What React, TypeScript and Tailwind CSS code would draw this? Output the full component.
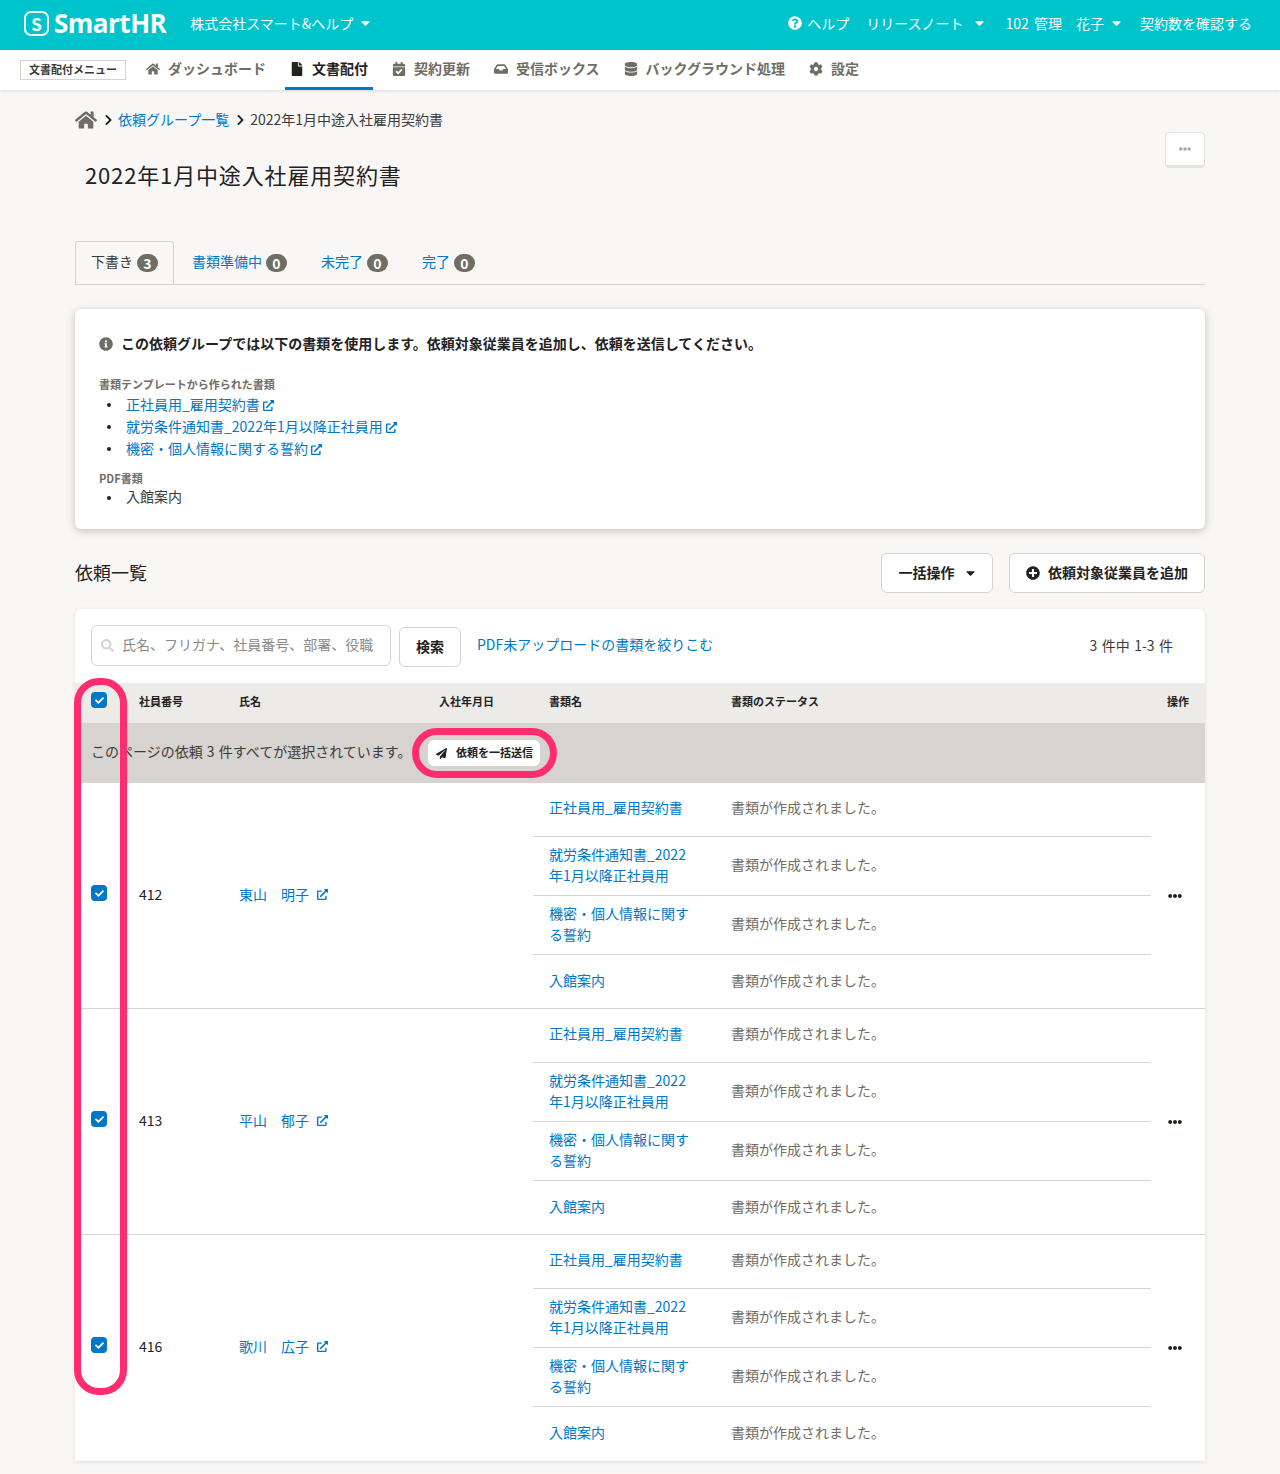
import React from "react";
import {
  FaHome, FaFile, FaCalendarCheck, FaInbox, FaDatabase, FaCog, FaQuestionCircle, FaInfoCircle,
  FaExternalLinkAlt, FaPaperPlane, FaPlusCircle, FaSearch, FaCaretDown, FaEllipsisH, FaChevronRight, FaCheck,
} from "react-icons/fa";

const Check = () => (
  <span className="flex h-4 w-4 items-center justify-center rounded-[4px] bg-[#0077c7] text-white">
    <FaCheck className="h-[9px] w-[9px]" />
  </span>
);

const Badge = ({ n }: { n: number }) => (
  <span className="ml-1 flex h-[18px] w-[21px] items-center justify-center rounded-full bg-[#706d65] text-[14px] font-bold leading-none text-white">{n}</span>
);

const Ext = ({ c = "ml-[3px]" }: { c?: string }) => <FaExternalLinkAlt className={`inline-block h-[11px] w-[11px] text-[#0077c7] ${c}`} />;

const docs = [
  { h: "h-[54px]", p: "pb-[4px]", t: "正社員用_雇用契約書" },
  { h: "h-[59px]", p: "pb-[2px]", t: "就労条件通知書_2022年1月以降正社員用" },
  { h: "h-[59px]", p: "pb-[2px]", t: "機密・個人情報に関する誓約" },
  { h: "h-[54px]", p: "pb-[4px]", t: "入館案内" },
];

const nav = [
  { i: <FaHome />, t: "ダッシュボード" },
  { i: <FaFile />, t: "文書配付", a: true },
  { i: <FaCalendarCheck />, t: "契約更新" },
  { i: <FaInbox />, t: "受信ボックス" },
  { i: <FaDatabase />, t: "バックグラウンド処理" },
  { i: <FaCog />, t: "設定" },
];

const Row = ({ id, name }: { id: string; name: string }) => (
  <div className="grid h-[226px] grid-cols-[48px_100px_200px_110px_618px_54px] border-b border-[#d6d3d0] last:border-b-0">
    <div className="flex items-center pb-[6px] pl-4"><Check /></div>
    <div className="flex items-center pb-[4px] pl-4 text-[14px]">{id}</div>
    <div className="flex items-center pl-4 text-[14px] text-[#0077c7]"><span className="whitespace-pre pb-[4px]">{name}</span><Ext c="ml-[8px] h-3 w-3 mb-[4px]" /></div>
    <div />
    <div>
      {docs.map((d, i) => (
        <div key={i} className={`flex items-center ${d.h} ${i < 3 ? "border-b border-[#d6d3d0]" : ""}`}>
          <div className={`w-[198px] shrink-0 pl-4 ${d.p}`}><span className="block w-[146px] text-[14px] leading-[21px] text-[#0077c7]">{d.t}</span></div>
          <span className="pb-[4px] text-[14px] text-[#706d65]">書類が作成されました。</span>
        </div>
      ))}
    </div>
    <div className="flex items-center justify-center pr-[7px] text-[#23221e]"><FaEllipsisH className="h-[14px] w-[14px]" /></div>
  </div>
);

export default function App() {
  return (
    <div className="relative h-[1474px] overflow-hidden bg-[#f8f7f6] text-[#23221e]" style={{ fontFamily: '"Noto Sans CJK JP", "Noto Sans", sans-serif' }}>
      <header className="flex h-[50px] items-center justify-between bg-[#00c4cc] pb-[4px] pl-6 pr-[28px] text-[14px] text-white">
        <div className="flex items-center">
          <span className="flex h-[25px] w-[25px] items-center justify-center rounded-[7px] border-[2.5px] border-white text-[17px] font-bold leading-none">S</span>
          <span className="ml-[5px] text-[26px] font-bold leading-none tracking-[-0.5px]" style={{ fontFamily: '"Open Sans", sans-serif' }}>SmartHR</span>
          <span className="ml-[24px]">株式会社スマート&amp;ヘルプ</span>
          <FaCaretDown className="ml-[7px] h-[14px] w-[11px]" />
        </div>
        <div className="flex items-center">
          <FaQuestionCircle className="h-[14px] w-[14px]" />
          <span className="ml-[5px]">ヘルプ</span>
          <span className="ml-[17px]">リリースノート</span>
          <FaCaretDown className="ml-[10px] h-[14px] w-[11px]" />
          <span className="ml-[21px] [word-spacing:2px]">102 管理</span>
          <span className="ml-[14px]">花子</span>
          <FaCaretDown className="ml-[7px] h-[14px] w-[11px]" />
          <span className="ml-[18px]">契約数を確認する</span>
        </div>
      </header>

      <nav className="relative flex h-10 items-center gap-[14px] bg-white pl-5 shadow-[0_1px_3px_rgba(0,0,0,0.12)]">
        <span className="mr-[1px] flex h-5 w-[106px] items-center justify-center border border-[#d6d3d0] text-[11px] font-bold text-[#3c3b36]"><span className="pb-[2px]">文書配付メニュー</span></span>
        {nav.map((n) => (
          <div key={n.t} className={`flex h-10 items-center gap-[8px] px-[5px] text-[14px] font-bold ${n.a ? "border-b-[3px] border-[#0077c7] pt-[3px] text-[#23221e]" : "text-[#706d65]"}`}>
            <span className="pb-[2px] text-[14px]">{n.i}</span>
            <span className="pb-[4px]">{n.t}</span>
          </div>
        ))}
      </nav>

      <main className="px-[75px]">
        <div className="mt-[19px] flex h-[22px] items-center text-[14px]">
          <FaHome className="h-[20px] w-[22px] text-[#706d65]" />
          <FaChevronRight className="ml-[7px] h-[12px] w-[9px]" />
          <span className="ml-[5px] pb-[2px] text-[#0077c7]">依頼グループ一覧</span>
          <FaChevronRight className="ml-[7px] h-[12px] w-[9px]" />
          <span className="ml-[5px] pb-[2px] text-[#3c3b36]">2022年1月中途入社雇用契約書</span>
        </div>

        <div className="mt-px flex items-start justify-between">
          <h1 className="mt-[26px] pl-[10px] text-[22px] font-normal leading-8 tracking-[0.85px]">2022年1月中途入社雇用契約書</h1>
          <div className="mb-[2px] flex h-[36px] w-10 items-center justify-center rounded-[4px] border border-b-[3px] border-[#e5e3e0] bg-white text-[#a8a6a2]"><FaEllipsisH className="h-3 w-3" /></div>
        </div>

        <div className="mt-[51px] flex h-11 items-stretch border-b border-[#d6d3d0] text-[14px]">
          <div className="flex w-[99px] items-center justify-center rounded-t-[3px] border border-b-0 border-[#d6d3d0] text-[#3c3b36]"><span className="pb-[3px]">下書き</span><Badge n={3} /></div>
          <div className="flex items-center pl-[18px] pr-[17px] text-[#0077c7]"><span className="pb-[3px]">書類準備中</span><Badge n={0} /></div>
          <div className="flex items-center px-[17px] text-[#0077c7]"><span className="pb-[3px]">未完了</span><Badge n={0} /></div>
          <div className="flex items-center px-[17px] text-[#0077c7]"><span className="pb-[3px]">完了</span><Badge n={0} /></div>
        </div>

        <section className="mt-6 h-[220px] rounded-[6px] bg-white px-6 pt-6 shadow-[0_2px_8px_rgba(0,0,0,0.22)]">
          <div className="flex h-[21px] items-center text-[14px] font-bold leading-[21px]">
            <FaInfoCircle className="mr-2 h-[14px] w-[14px] text-[#706d65]" />
            この依頼グループでは以下の書類を使用します。依頼対象従業員を追加し、依頼を送信してください。
          </div>
          <div className="mt-[22px] flex h-[18px] items-center pb-[2px] text-[11px] font-bold text-[#706d65]">書類テンプレートから作られた書類</div>
          <ul className="text-[14px] text-[#0077c7]">
            {["正社員用_雇用契約書", "就労条件通知書_2022年1月以降正社員用", "機密・個人情報に関する誓約"].map((t) => (
              <li key={t} className="flex h-[22px] items-center">
                <span className="ml-2 mr-[15px] h-1 w-1 rounded-full bg-[#23221e]" /><span className="pb-[2px]">{t}</span><Ext />
              </li>
            ))}
          </ul>
          <div className="mt-[9px] flex h-[18px] items-center text-[11px] font-bold text-[#706d65]">PDF書類</div>
          <div className="flex h-[21px] items-center text-[14px] text-[#3c3b36]">
            <span className="ml-2 mr-[15px] h-1 w-1 rounded-full bg-[#23221e]" /><span className="pb-[2px]">入館案内</span>
          </div>
        </section>

        <div className="mt-6 flex h-10 items-center justify-between">
          <h2 className="pb-[2px] text-[18px] font-normal">依頼一覧</h2>
          <div className="flex gap-4 text-[14px] font-bold">
            <button className="flex h-10 w-28 items-center justify-center rounded-[6px] border border-[#d6d3d0] bg-white"><span className="pb-[2px]">一括操作</span><FaCaretDown className="ml-[10px] h-[14px] w-[11px]" /></button>
            <button className="flex h-10 w-[196px] items-center justify-center rounded-[6px] border border-[#d6d3d0] bg-white"><FaPlusCircle className="mr-2 h-[14px] w-[14px]" /><span className="pb-[2px]">依頼対象従業員を追加</span></button>
          </div>
        </div>

        <section className="mt-4 h-[852px] rounded-t-[6px] bg-white shadow-[0_1px_4px_rgba(0,0,0,0.1)]">
          <div className="flex h-[74px] items-start pl-4 pr-8 pt-4 text-[14px]">
            <div className="flex h-[41px] w-[300px] items-center rounded-[6px] border border-[#d6d3d0] pl-[9px] text-[#8c8a85]">
              <FaSearch className="mr-2 h-[13px] w-[13px] text-[#d6d3d0]" /><span className="pb-[2px]">氏名、フリガナ、社員番号、部署、役職</span>
            </div>
            <button className="ml-2 mt-[2px] flex h-10 w-[62px] items-center justify-center rounded-[6px] border border-[#d6d3d0] font-bold"><span className="pb-[2px]">検索</span></button>
            <span className="ml-4 mt-[9px] text-[#0077c7]">PDF未アップロードの書類を絞りこむ</span>
            <span className="ml-auto mt-[10px] text-[#3c3b36] [word-spacing:1.3px]">3 件中 1-3 件</span>
          </div>

          <div className="grid h-10 grid-cols-[48px_100px_200px_110px_198px_420px_54px] items-center bg-[#edebe8] text-[11px] font-bold">
            <div className="pb-[6px] pl-4"><Check /></div>
            <div className="pb-[4px] pl-4">社員番号</div>
            <div className="pb-[4px] pl-4">氏名</div>
            <div className="pb-[4px] pl-4">入社年月日</div>
            <div className="pb-[4px] pl-4">書類名</div>
            <div className="pb-[4px]">書類のステータス</div>
            <div className="pb-[4px] pr-4 text-right">操作</div>
          </div>

          <div className="flex h-[60px] items-center bg-[#d6d3d0] pl-4 text-[14px] text-[#3c3b36]">
            <span className="pb-[4px] [word-spacing:1px]">このページの依頼 3 件すべてが選択されています。</span>
            <span className="ml-[17px] flex h-[26px] w-28 items-center justify-center rounded-[6px] bg-white text-[11px] font-bold text-[#23221e]">
              <FaPaperPlane className="mr-[9px] h-[11px] w-[11px]" /><span className="pb-[2px]">依頼を一括送信</span>
            </span>
          </div>

          <Row id="412" name="東山　明子" />
          <Row id="413" name="平山　郁子" />
          <Row id="416" name="歌川　広子" />
        </section>
      </main>

      <div className="pointer-events-none absolute left-[74px] top-[678px] h-[717px] w-[53px] rounded-[25px] border-[7px] border-[#ff2d6f]" />
      <div className="pointer-events-none absolute left-[412px] top-[728px] h-[50px] w-[145px] rounded-[25px] border-[7px] border-[#ff2d6f]" />
    </div>
  );
}
